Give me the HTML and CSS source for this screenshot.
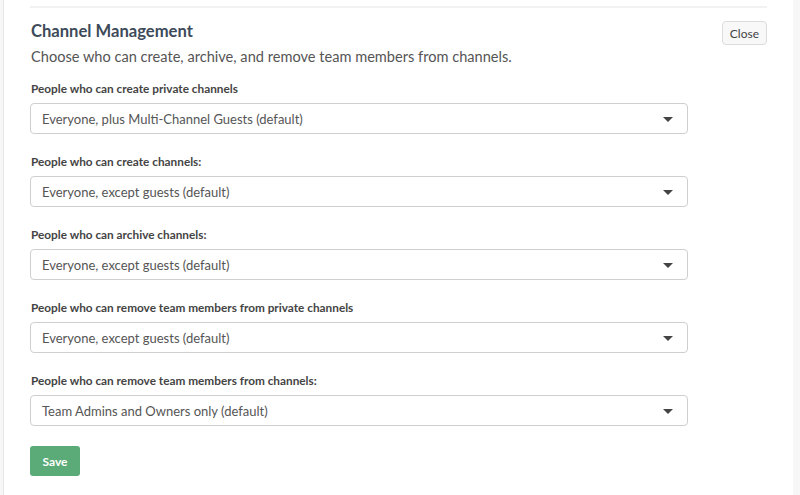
FILE: index.html
```html
<!DOCTYPE html>
<html lang="en">

<head>
    <meta charset="UTF-8">
    <title>Channel Management</title>
    <link rel="stylesheet" href="styles.css">
</head>

<body>
    <div id="page">
        <div class="gutter"></div>
        <div class="main">
            <div class="rule"></div>
            <div class="header">
                <div>
                    <h3>Channel Management</h3>
                    <p class="desc">Choose who can create, archive, and remove team members from channels.</p>
                </div>
                <button class="close">Close</button>
            </div>

            <div class="field">
                <label>People who can create private channels</label>
                <div class="select"><span>Everyone, plus Multi-Channel Guests (default)</span><i class="caret"></i></div>
            </div>
            <div class="field">
                <label>People who can create channels:</label>
                <div class="select"><span>Everyone, except guests (default)</span><i class="caret"></i></div>
            </div>
            <div class="field">
                <label>People who can archive channels:</label>
                <div class="select"><span>Everyone, except guests (default)</span><i class="caret"></i></div>
            </div>
            <div class="field">
                <label>People who can remove team members from private channels</label>
                <div class="select"><span>Everyone, except guests (default)</span><i class="caret"></i></div>
            </div>
            <div class="field">
                <label>People who can remove team members from channels:</label>
                <div class="select"><span>Team Admins and Owners only (default)</span><i class="caret"></i></div>
            </div>

            <button class="save">Save</button>
        </div>
        <div class="side"></div>
    </div>
</body>

</html>
```

FILE: styles.css
```css
body {
    margin: 0;
    font-family: Lato, "Open Sans", sans-serif;
    background: #fff;
}

#page {
    display: flex;
    height: 495px;
    overflow: hidden;
}

.gutter {
    width: 3px;
    background: #f7f7f7;
    border-right: 1px solid #e6e6e6;
}

.main {
    flex: 1;
    padding: 0 26px;
}

.side {
    width: 7px;
    background: #f7f7f7;
}

.rule {
    margin-top: 6px;
    border-top: 2px solid #f2f2f2;
}

.header {
    display: flex;
    justify-content: space-between;
    align-items: flex-start;
    margin-bottom: 14px;
}

.header h3 {
    margin: 12px 0 0 1px;
    font-size: 16.6px;
    font-weight: 700;
    color: #3d4a5a;
    line-height: 22px;
}

.header .desc {
    margin: 5px 0 0 1px;
    font-size: 14.6px;
    color: #555;
    line-height: 20px;
}

.close {
    margin-top: 13px;
    height: 24px;
    padding: 0 7px;
    font-family: inherit;
    font-size: 12px;
    color: #444;
    background: #f8f8f8;
    border: 1px solid #dcdcdc;
    border-radius: 4px;
}

.field {
    margin-bottom: 20px;
}

.field label {
    display: block;
    margin: 0 0 7px 1px;
    font-size: 11.8px;
    font-weight: 700;
    color: #444;
    line-height: 15px;
}

.select {
    display: flex;
    justify-content: space-between;
    align-items: center;
    padding: 0 14px 0 11px;
    box-sizing: border-box;
    width: 658px;
    height: 31px;
    border: 1px solid #cfcfcf;
    border-radius: 4px;
    font-size: 13px;
    color: #555;
}

.caret {
    width: 0;
    height: 0;
    border-left: 5px solid transparent;
    border-right: 5px solid transparent;
    border-top: 5px solid #444;
    margin-top: 2px;
}

.save {
    width: 50px;
    height: 30px;
    font-family: inherit;
    font-size: 12px;
    font-weight: 700;
    color: #fff;
    background: #5aab78;
    border: none;
    border-radius: 3px;
}
```
